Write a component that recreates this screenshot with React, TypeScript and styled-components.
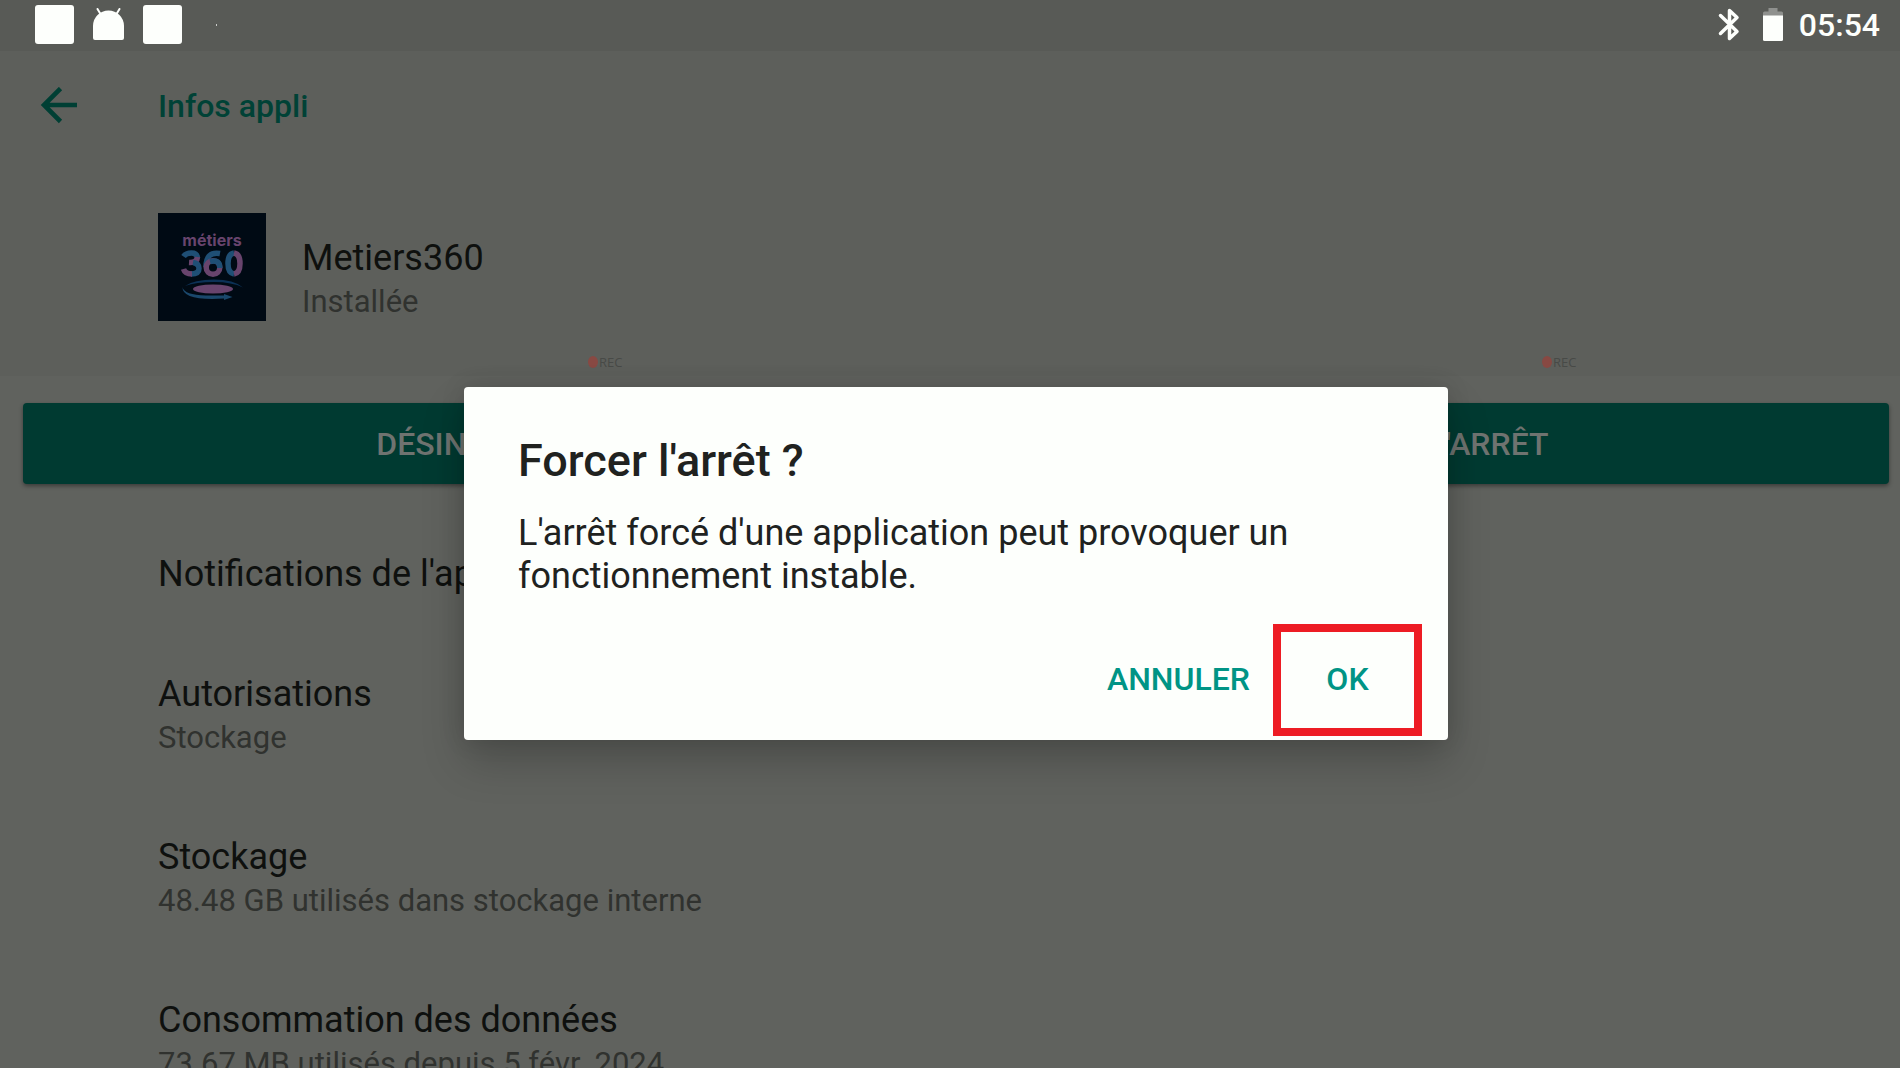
import React from 'react';
import styled, { createGlobalStyle } from 'styled-components';

const GlobalStyle = createGlobalStyle`
  * { box-sizing: border-box; }
  html, body, #root { height: 100%; margin: 0; }
  body { background: #60625e; overflow: hidden; font-family: Roboto, "Liberation Sans", sans-serif; }
  button { font-family: inherit; border: 0; padding: 0; cursor: pointer; }
  h1, h2, p { margin: 0; }
`;

const Screen = styled.div`
  position: relative;
  height: 100vh;
  overflow: hidden;
  background: #60625e;
`;

const StatusBar = styled.div`
  display: flex;
  align-items: center;
  justify-content: space-between;
  height: 51px;
  padding: 0 20px 2px 35px;
  background: #585a56;
  color: #fdfffc;
`;

const StatusGroup = styled.div<{ $gap: number }>`
  display: flex;
  align-items: center;
  gap: ${(p) => p.$gap}px;
`;

const Notice = styled.span`
  width: 39px;
  height: 39px;
  border-radius: 3px;
  background: #fdfffc;
`;

const Dot = styled.span`
  width: 1px;
  height: 2px;
  margin-left: 15px;
  background: #c9cbc8;
`;

const Clock = styled.time`
  font-size: 32px;
  line-height: 38px;
  font-weight: 500;
`;

const Header = styled.header`
  height: 325px;
  padding: 31px 40px;
  background: #5d5f5b;
`;

const Toolbar = styled.div`
  display: flex;
  align-items: center;
  gap: 80px;
  height: 48px;
`;

const BackButton = styled.button`
  display: flex;
  width: 38px;
  height: 38px;
  background: none;
`;

const PageTitle = styled.h1`
  font-size: 32px;
  line-height: 44px;
  font-weight: 500;
  color: #004236;
`;

const AppSummary = styled.div`
  display: flex;
  gap: 36px;
  margin-top: 83px;
  padding-left: 118px;
`;

const AppText = styled.div`
  padding-top: 23px;
`;

const Title = styled.h2`
  font-size: 36px;
  line-height: 44px;
  font-weight: 400;
  color: #0e100e;
`;

const Subtitle = styled.p`
  font-size: 31px;
  line-height: 43px;
  color: #30322f;
`;

const Actions = styled.div`
  display: flex;
  gap: 10px;
  padding: 27px 11px 30px 23px;
`;

const ActionButton = styled.button`
  flex: 1;
  height: 81px;
  border-radius: 4px;
  background: #003a31;
  color: #6f7370;
  font-size: 32px;
  line-height: 38px;
  font-weight: 500;
  box-shadow: 0 2px 4px rgba(0, 0, 0, 0.4);
`;

const Row = styled.div`
  padding: 38px 40px 38px 158px;
`;

const Recording = styled.div<{ $left: string }>`
  position: absolute;
  top: 354px;
  left: ${(p) => p.$left};
  display: flex;
  align-items: center;
  gap: 1px;
  font-family: "Open Sans", sans-serif;
  font-size: 13px;
  line-height: 16px;
  color: #484a47;
`;

const RecordDot = styled.span`
  width: 10px;
  height: 12px;
  border-radius: 50%;
  background: #884943;
`;

const Overlay = styled.div`
  position: absolute;
  inset: 59px 0 0 12px;
  display: flex;
  align-items: center;
  justify-content: center;
`;

const Dialog = styled.section`
  width: 90%;
  max-width: 984px;
  padding: 46px 26px 4px 54px;
  border-radius: 4px;
  background: #fdfffc;
  color: #20221f;
  box-shadow: 0 22px 44px rgba(0, 0, 0, 0.2), 0 0 24px rgba(0, 0, 0, 0.12);
`;

const DialogTitle = styled.h2`
  font-size: 45px;
  line-height: 55px;
  font-weight: 500;
`;

const DialogText = styled.p`
  max-width: 860px;
  padding: 24px 0 26px;
  font-size: 36px;
  line-height: 43px;
`;

const DialogActions = styled.div`
  display: flex;
  justify-content: flex-end;
  gap: 23px;
`;

const DialogButton = styled.button<{ $framed?: boolean }>`
  height: 112px;
  width: ${(p) => (p.$framed ? '149px' : 'auto')};
  padding-bottom: 3px;
  border: ${(p) => (p.$framed ? '8px solid #ed1c24' : '0')};
  background: none;
  color: #009485;
  font-size: 32px;
  line-height: 38px;
  font-weight: 500;
`;

const rows = [
  { title: "Notifications de l'application" },
  { title: 'Autorisations', detail: 'Stockage' },
  { title: 'Stockage', detail: '48.48 GB utilisés dans stockage interne' },
  { title: 'Consommation des données', detail: '73.67 MB utilisés depuis 5 févr. 2024' },
];

const AndroidIcon = () => (
  <svg width="31" height="34" viewBox="0 0 31 34" fill="#fdfffc" aria-hidden="true">
    <path d="M0 18a15.5 15.5 0 0 1 31 0v12q0 2-2 2H2q-2 0-2-2z" />
    <path d="M4.500 1l3 5M26.500 1l-3 5" stroke="#fdfffc" strokeWidth="2" strokeLinecap="round" />
  </svg>
);

const BluetoothIcon = () => (
  <svg width="29" height="34" viewBox="0 1 29 34" fill="none" stroke="#fdfffc" strokeWidth="3.500" strokeLinejoin="round" strokeLinecap="round" aria-hidden="true">
    <path d="M2.500 8.500L19 24.500l-7.500 7V3.500l7.500 7L2.500 26.500" />
  </svg>
);

const BatteryIcon = () => (
  <svg width="20" height="34" viewBox="0 1 20 34" aria-hidden="true">
    <path d="M5.500 1h9v3.500H18.500q1.500 0 1.500 1.500V10H0V6q0-1.500 1.500-1.500h4z" fill="#8f918e" />
    <path d="M0 8.500h20v24q0 1.500-1.500 1.500h-17Q0 34 0 32.500z" fill="#fdfffc" />
  </svg>
);

const BackArrow = () => (
  <svg width="38" height="38" viewBox="0 1 38 38" fill="none" stroke="#003f34" strokeWidth="4.600" aria-hidden="true">
    <path d="M20.500 2.500L4 19l16.500 16.500M4 19H37" />
  </svg>
);

const AppLogo = () => (
  <svg width="108" height="108" viewBox="0 0 108 108" role="img" aria-label="métiers 360">
    <rect width="108" height="108" fill="#000a14" />
    <text x="54" y="33" textAnchor="middle" fontFamily="Inter, sans-serif" fontWeight="700" fontSize="16" fill="#68446d">métiers</text>
    <g fill="none" strokeWidth="5.500">
      <path d="M25.500 43.500Q28 40 33.500 40Q39 40 39.500 45" stroke="#1f4f75" />
      <path d="M39.500 44Q39 50 31 49.500" stroke="#68446d" />
      <path d="M35 49.500Q41 50.500 41 55.500Q41 61 33 61" stroke="#1f4f75" />
      <path d="M25.500 56Q27 61 34 61" stroke="#68446d" />
      <path d="M62 40.500Q48 38 48 54" stroke="#1f4f75" />
      <circle cx="55" cy="54.500" r="6.800" stroke="#68446d" />
      <path d="M52 48.500Q62 46 61.800 55" stroke="#1f4f75" />
      <path d="M76 40Q70 41 70 50.500T76 61" stroke="#1f4f75" />
      <path d="M76 40Q82 41 82 50.500T76 61" stroke="#68446d" />
    </g>
    <ellipse cx="55" cy="76" rx="20" ry="4.500" fill="#68446d" />
    <path d="M27 73Q36 66.500 56 66.500T85 74.500Q74 69 56 69T27 73z" fill="#0b3156" />
    <path d="M24.500 74Q26 82 48 82.500H66V81L74.500 84L66 87V85.500Q24 88 24.500 74z" fill="#1a486c" />
  </svg>
);

export default function App() {
  return (
    <Screen>
      <GlobalStyle />
      <StatusBar>
        <StatusGroup $gap={19}>
          <Notice />
          <AndroidIcon />
          <Notice />
          <Dot />
        </StatusGroup>
        <StatusGroup $gap={16}>
          <BluetoothIcon />
          <BatteryIcon />
          <Clock>05:54</Clock>
        </StatusGroup>
      </StatusBar>
      <Header>
        <Toolbar>
          <BackButton aria-label="Retour"><BackArrow /></BackButton>
          <PageTitle>Infos appli</PageTitle>
        </Toolbar>
        <AppSummary>
          <AppLogo />
          <AppText>
            <Title>Metiers360</Title>
            <Subtitle>Installée</Subtitle>
          </AppText>
        </AppSummary>
      </Header>
      <Actions>
        <ActionButton>DÉSINSTALLER</ActionButton>
        <ActionButton>FORCER L'ARRÊT</ActionButton>
      </Actions>
      {rows.map((row) => (
        <Row key={row.title}>
          <Title>{row.title}</Title>
          {row.detail && <Subtitle>{row.detail}</Subtitle>}
        </Row>
      ))}
      <Recording $left="588px"><RecordDot />REC</Recording>
      <Recording $left="1542px"><RecordDot />REC</Recording>
      <Overlay>
        <Dialog role="dialog" aria-modal="true" aria-labelledby="dialog-title">
          <DialogTitle id="dialog-title">Forcer l'arrêt ?</DialogTitle>
          <DialogText>L'arrêt forcé d'une application peut provoquer un fonctionnement instable.</DialogText>
          <DialogActions>
            <DialogButton>ANNULER</DialogButton>
            <DialogButton $framed>OK</DialogButton>
          </DialogActions>
        </Dialog>
      </Overlay>
    </Screen>
  );
}
